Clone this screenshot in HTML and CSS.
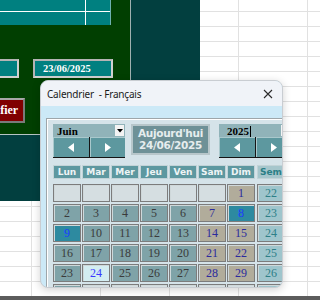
FILE: index.html
```html
<!DOCTYPE html>
<html>

<head>
    <meta charset="utf-8">
    <title>Calendrier</title>
    <link rel="stylesheet" href="styles.css">
</head>

<body>

    <div class="screen">

        <div class="sheet">
            <div class="form-top">
                <div class="green">
                    <div class="table">
                        <div class="tc"></div><div class="tc"></div>
                        <div class="tc"></div><div class="tc"></div>
                    </div>
                    <div class="fields">
                        <div class="field short"></div>
                        <div class="field">23/06/2025</div>
                    </div>
                    <button type="button" class="btn-red">Modifier</button>
                </div>
                <div class="teal-panel"></div>
            </div>
            <div class="teal-block"></div>
        </div>

        <div class="taskbar"></div>

        <!-- the calendar window over the sheet -->
        <div class="dialog">
            <div class="titlebar">
                <span class="title">Calendrier &nbsp;- Français</span>
                <svg class="close" width="10" height="10" viewBox="0 0 10 10">
                    <path d="M1 1 L9 9 M9 1 L1 9" stroke="#2b2b2b" stroke-width="1.1" fill="none"/>
                </svg>
            </div>

            <div class="client">
                <div class="frame">

                    <div class="controls">
                        <div class="picker">
                            <div class="combo"><span>Juin</span><span class="drop"><svg width="6" height="4" viewBox="0 0 6 4"><path d="M0 0 H6 L3 3.5 Z" fill="#000"/></svg></span></div>
                            <div class="arrows">
                                <button type="button" class="arrow"><svg width="6" height="9" viewBox="0 0 6 9"><path d="M6 0 V9 L0 4.5 Z" fill="#fff"/></svg></button>
                                <button type="button" class="arrow"><svg width="6" height="9" viewBox="0 0 6 9"><path d="M0 0 V9 L6 4.5 Z" fill="#fff"/></svg></button>
                            </div>
                        </div>

                        <div class="today">Aujourd'hui<br>24/06/2025</div>

                        <div class="picker year">
                            <div class="combo"><span>2025<i class="caret"></i></span><span class="drop"><svg width="6" height="4" viewBox="0 0 6 4"><path d="M0 0 H6 L3 3.5 Z" fill="#000"/></svg></span></div>
                            <div class="arrows">
                                <button type="button" class="arrow"><svg width="6" height="9" viewBox="0 0 6 9"><path d="M6 0 V9 L0 4.5 Z" fill="#fff"/></svg></button>
                                <button type="button" class="arrow"><svg width="6" height="9" viewBox="0 0 6 9"><path d="M0 0 V9 L6 4.5 Z" fill="#fff"/></svg></button>
                            </div>
                        </div>
                    </div>

                    <div class="head">
                        <div class="hd">Lun</div><div class="hd">Mar</div><div class="hd">Mer</div><div class="hd">Jeu</div>
                        <div class="hd">Ven</div><div class="hd">Sam</div><div class="hd">Dim</div><div class="hd sem">Sem</div>
                    </div>

                    <div class="days">
                        <div class="d empty"></div><div class="d empty"></div><div class="d empty"></div><div class="d empty"></div>
                        <div class="d empty"></div><div class="d empty"></div><div class="d we">1</div><div class="d sem">22</div>

                        <div class="d">2</div><div class="d">3</div><div class="d">4</div><div class="d">5</div>
                        <div class="d">6</div><div class="d we">7</div><div class="d sel">8</div><div class="d sem">23</div>

                        <div class="d sel">9</div><div class="d">10</div><div class="d">11</div><div class="d">12</div>
                        <div class="d">13</div><div class="d we">14</div><div class="d we">15</div><div class="d sem">24</div>

                        <div class="d">16</div><div class="d">17</div><div class="d">18</div><div class="d">19</div>
                        <div class="d">20</div><div class="d we">21</div><div class="d we">22</div><div class="d sem">25</div>

                        <div class="d">23</div><div class="d now">24</div><div class="d">25</div><div class="d">26</div>
                        <div class="d">27</div><div class="d we">28</div><div class="d we">29</div><div class="d sem">26</div>

                        <div class="d">30</div><div class="d empty"></div><div class="d empty"></div><div class="d empty"></div>
                        <div class="d empty"></div><div class="d empty"></div><div class="d empty"></div><div class="d sem">27</div>
                    </div>

                </div>
            </div>
        </div>

    </div>

</body>

</html>
```

FILE: styles.css
```css
body {
    margin: 0;
    overflow: hidden;
}

.screen {
    position: relative;
    width: 320px;
    height: 300px;
    display: flex;
    flex-direction: column;
    overflow: hidden;
}

/* excel sheet behind the window */
.sheet {
    height: 296px;
    background-color: #ffffff;
    background-image:
        linear-gradient(to bottom, #e1e1e1 1px, transparent 1px),
        linear-gradient(to right, #e1e1e1 1px, transparent 1px);
    background-size: 100% 15px, 69px 100%;
    background-position: 0 11px, 31px 0;
}

.taskbar {
    height: 4px;
    background-color: #5c5c5c;
}

.form-top {
    display: flex;
    align-items: flex-start;
}

.green {
    width: 130px;
    height: 134px;
    background-color: #013f01;
    border-right: 1px solid #9fb0b0;
    display: flex;
    flex-direction: column;
    align-items: flex-start;
}

.teal-panel {
    width: 69px;
    height: 80px;
    background-color: #023f3f;
}

.teal-block {
    width: 130px;
    height: 66px;
    background-color: #023f3f;
    border-top: 1px solid #b8c4c4;
}

.table {
    display: grid;
    grid-template-columns: 85px 24px;
    grid-template-rows: 11px 13px;
    gap: 1px;
    background-color: #ffffff;
    border-right: 1px solid #6fb0b0;
}

.tc {
    background-color: #008080;
}

.fields {
    display: flex;
    gap: 14px;
    margin-top: 34px;
}

.field {
    box-sizing: border-box;
    width: 80px;
    height: 19px;
    background-color: #008080;
    border: 2px solid #b4b4b4;
    border-right-color: #d0d0d0;
    border-bottom-color: #d0d0d0;
    color: #ffffff;
    font-family: "Liberation Serif", serif;
    font-weight: bold;
    font-size: 10.5px;
    line-height: 15px;
    padding-left: 8px;
}

.field.short {
    width: 40px;
    margin-left: -21px;
}

.btn-red {
    box-sizing: border-box;
    width: 59px;
    height: 25px;
    margin-top: 20px;
    margin-left: -34px;
    padding: 0;
    background-color: #800000;
    border: 2px solid #a8a8a8;
    border-right-color: #7a7a7a;
    border-bottom-color: #7a7a7a;
    color: #ffffff;
    font-family: "Liberation Serif", serif;
    font-weight: bold;
    font-size: 12px;
    text-align: center;
}

/* window */
.dialog {
    position: absolute;
    left: 40px;
    top: 80px;
    width: 243px;
    height: 208px;
    box-sizing: border-box;
    border: 1px solid #c9cdd2;
    border-radius: 8px;
    overflow: hidden;
    background-color: #cce9f7;
    box-shadow: 0 2px 8px rgba(0, 0, 0, 0.18);
    display: flex;
    flex-direction: column;
}

.titlebar {
    height: 25px;
    flex: none;
    background-color: #f0f3f8;
    display: flex;
    align-items: center;
    justify-content: space-between;
    padding: 0 9px 0 6px;
}

.title {
    font-family: "Noto Sans", sans-serif;
    font-size: 10px;
    letter-spacing: -0.2px;
    color: #1b1b1b;
    white-space: pre;
}

.client {
    padding: 12px 0 0 5px;
}

.frame {
    width: 250px;
    height: 200px;
    box-sizing: border-box;
    border: 1px solid #9ea6aa;
    box-shadow: inset 1px 1px 0 #ffffff;
    background-color: #d5e3e9;
    padding: 5px 0 0 6px;
}

.controls {
    display: flex;
    align-items: flex-start;
}

.picker {
    width: 72px;
}

.picker.year {
    margin-left: 9px;
}

.combo {
    height: 13px;
    background-color: #90b3b9;
    display: flex;
    justify-content: space-between;
    align-items: center;
    font-family: "Liberation Serif", serif;
    font-weight: bold;
    font-size: 11px;
    color: #000000;
    padding-left: 4px;
}

.year .combo {
    padding-left: 8px;
}

.caret {
    display: inline-block;
    width: 1px;
    height: 11px;
    background-color: #000000;
    vertical-align: -2px;
    margin-left: 1px;
}

.drop {
    width: 9px;
    height: 11px;
    margin-right: 1px;
    background-color: #f3f3f3;
    display: flex;
    align-items: center;
    justify-content: center;
}

.arrows {
    display: flex;
    gap: 1px;
    background-color: #151515;
    padding-bottom: 1px;
}

.arrow {
    flex: 1;
    height: 20px;
    padding: 0;
    background-color: #5d989f;
    border: none;
    border-top: 1px solid #a9c8cc;
    border-left: 1px solid #a9c8cc;
    display: flex;
    align-items: center;
    justify-content: center;
}

.today {
    box-sizing: border-box;
    width: 79px;
    height: 31px;
    margin-left: 6px;
    background-color: #6e9197;
    border: 2px solid #b7c6ca;
    color: #e6edee;
    font-family: "DejaVu Sans", sans-serif;
    font-weight: bold;
    font-size: 10.5px;
    letter-spacing: -0.3px;
    line-height: 12px;
    text-align: center;
    padding-top: 1px;
    white-space: nowrap;
}

.head {
    display: grid;
    grid-template-columns: repeat(7, 28px) 29px;
    column-gap: 1px;
    margin-top: 7px;
}

.hd {
    box-sizing: border-box;
    height: 14px;
    background-color: #5d98a0;
    border: 1px solid #c2d3d7;
    color: #eef4f5;
    font-family: "DejaVu Sans", sans-serif;
    font-weight: bold;
    font-size: 9px;
    line-height: 12px;
    text-align: center;
}

.hd.sem {
    margin-left: 1px;
    background-color: #a6c6cc;
    color: #2b7f86;
}

.days {
    display: grid;
    grid-template-columns: repeat(7, 28px) 29px;
    grid-auto-rows: 18px;
    column-gap: 1px;
    row-gap: 2px;
    margin-top: 5px;
}

.d {
    box-sizing: border-box;
    background-color: #7fa3a8;
    border: 1px solid #7c7c7c;
    box-shadow: inset 1px 1px 0 #cfd8da;
    color: #3b3b3b;
    font-family: "Liberation Serif", serif;
    font-size: 12px;
    line-height: 16px;
    text-align: center;
}

.d.empty {
    background-color: #d5dee1;
}

.d.we {
    background-color: #b1ac9b;
    color: #2b2b9e;
}

.d.sel {
    background-color: #2d8aa0;
    color: #1c3cff;
}

.d.now {
    background-color: #d3edf1;
    color: #3a3aff;
}

.d.sem {
    margin-left: 1px;
    background-color: #9fc5cc;
    color: #2e8088;
}
```
